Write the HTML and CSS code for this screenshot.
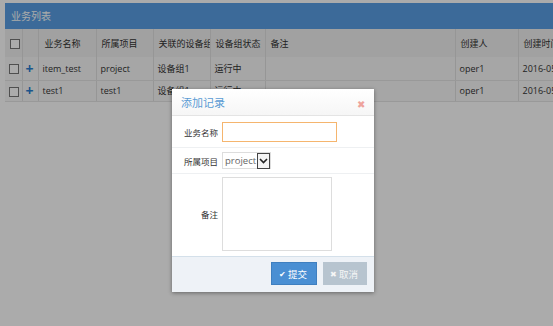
FILE: index.html
```html
<!DOCTYPE html>
<html lang="zh-CN">
<head>
    <meta charset="UTF-8">
    <title>业务列表</title>
    <link rel="stylesheet" href="styles.css">
</head>
<body>
<div class="panel">
    <div class="panel-title">业务列表</div>
    <table class="grid">
        <colgroup>
            <col style="width:17px">
            <col style="width:16px">
            <col style="width:58px">
            <col style="width:57px">
            <col style="width:57px">
            <col style="width:55px">
            <col style="width:190px">
            <col style="width:63px">
            <col style="width:60px">
        </colgroup>
        <thead>
        <tr>
            <th><span class="chk"></span></th>
            <th></th>
            <th class="pad">业务名称</th>
            <th>所属项目</th>
            <th>关联的设备组</th>
            <th>设备组状态</th>
            <th>备注</th>
            <th>创建人</th>
            <th>创建时间</th>
        </tr>
        </thead>
        <tbody>
        <tr>
            <td><span class="chk"></span></td>
            <td class="plus">+</td>
            <td>item_test</td>
            <td>project</td>
            <td>设备组1</td>
            <td>运行中</td>
            <td></td>
            <td>oper1</td>
            <td>2016-05-12</td>
        </tr>
        <tr>
            <td><span class="chk"></span></td>
            <td class="plus">+</td>
            <td>test1</td>
            <td>test1</td>
            <td>设备组1</td>
            <td>运行中</td>
            <td></td>
            <td>oper1</td>
            <td>2016-05-12</td>
        </tr>
        </tbody>
    </table>
</div>

<div class="mask"></div>

<!-- 添加记录弹窗 -->
<div class="modal">
    <div class="modal-head">
        <span class="modal-title">添加记录</span>
        <span class="modal-close">&#10006;</span>
    </div>
    <div class="modal-body">
        <div class="form-row">
            <label>业务名称</label>
            <input class="text-input" type="text">
        </div>
        <div class="form-row">
            <label>所属项目</label>
            <div class="select"><span>project</span><span class="arrow"><svg width="9" height="6" viewBox="0 0 9 6"><path d="M1 1l3.5 3.5L8 1" fill="none" stroke="#222" stroke-width="1.6"/></svg></span></div>
        </div>
        <div class="form-row last">
            <label>备注</label>
            <div class="textarea"></div>
        </div>
    </div>
    <div class="modal-foot">
        <button class="btn btn-ok"><span class="ico">&#10004;</span>提交</button>
        <button class="btn btn-cancel"><span class="ico">&#10006;</span>取消</button>
    </div>
</div>
</body>
</html>
```

FILE: styles.css
```css
* {
    margin: 0;
    padding: 0;
    box-sizing: border-box;
}

body {
    font-family: 'Open Sans', 'Noto Sans CJK SC', sans-serif;
    font-size: 9px;
    color: #333;
    background: #fff;
    height: 326px;
    overflow: hidden;
    padding: 3px 0 0 5px;
    position: relative;
}

/* 列表 */
.panel {
    width: 560px;
}

.panel-title {
    height: 26px;
    line-height: 26px;
    padding-left: 6px;
    background: #5a9fe4;
    color: #fff;
    font-size: 10px;
}

.grid {
    border-collapse: collapse;
    table-layout: fixed;
    width: 573px;
}

.grid th {
    height: 28px;
    font-weight: normal;
    text-align: left;
    padding: 0 5px;
    background: #f0f0f0;
    border-right: 1px solid #e0e0e0;
    white-space: nowrap;
    overflow: hidden;
    color: #333;
}

.grid td {
    height: 23px;
    padding: 0 4px;
    background: #f8f8f8;
    border-right: 1px solid #e0e0e0;
    border-bottom: 1px solid #e4e4e4;
    white-space: nowrap;
    overflow: hidden;
}

.grid tbody tr:last-child td {
    height: 21px;
}

.grid th.pad {
    padding-left: 6px;
}

.chk {
    display: inline-block;
    width: 10px;
    height: 10px;
    border: 1px solid #777;
    background: #fff;
    vertical-align: middle;
}

.grid .plus {
    color: #2a7ed0;
    font-weight: bold;
    font-size: 14px;
    padding-left: 3px;
}

/* 遮罩 */
.mask {
    position: absolute;
    left: 0;
    top: 0;
    width: 100%;
    height: 100%;
    background: rgba(0, 0, 0, 0.33);
}

/* 弹窗 */
.modal {
    position: absolute;
    left: 172px;
    top: 89px;
    width: 202px;
    height: 203px;
    background: #fff;
    box-shadow: 0 1px 4px rgba(0, 0, 0, 0.4);
    display: flex;
    flex-direction: column;
}

.modal-head {
    height: 27px;
    display: flex;
    align-items: center;
    justify-content: space-between;
    padding: 0 9px 0 9px;
    border-bottom: 1px solid #e4e4e4;
    background: linear-gradient(#ffffff, #f6f6f6);
}

.modal-title {
    color: #5a9bd4;
    font-size: 11px;
}

.modal-close {
    color: #eea39c;
    font-size: 10px;
    margin-top: 4px;
}

.modal-body {
    flex: 1;
}

.form-row {
    display: flex;
    align-items: center;
    border-bottom: 1px solid #eef0f2;
    padding: 5px 0;
}

.form-row:first-child {
    height: 32px;
}

.form-row:nth-child(2) {
    height: 26px;
    padding: 3px 0;
}

.form-row.last {
    border-bottom: none;
    padding: 3px 0;
}

.form-row label {
    width: 46px;
    text-align: right;
    margin-right: 4px;
    color: #333;
    font-size: 8.5px;
}

.text-input {
    width: 115px;
    height: 20px;
    border: 1px solid #f5b56e;
    outline: none;
}

.select {
    display: flex;
    align-items: center;
    height: 17px;
    border: 1px solid #ddd;
    padding-left: 2px;
    color: #666;
    font-size: 9.5px;
}

.select .arrow {
    display: flex;
    align-items: center;
    justify-content: center;
    width: 13px;
    height: 16px;
    margin-left: 1px;
    border: 1px solid #444;
    background: #f4f4f4;
}

.textarea {
    width: 110px;
    height: 74px;
    border: 1px solid #ddd;
}

.modal-foot {
    height: 36px;
    background: #eef2f7;
    border-top: 1px solid #d4e0ea;
    display: flex;
    align-items: center;
    justify-content: flex-end;
    padding: 0 7px 2px 0;
    gap: 6px;
}

.btn {
    height: 23px;
    border: none;
    color: #fff;
    font-family: 'Open Sans', 'Noto Sans CJK SC', sans-serif;
    font-size: 9.5px;
    padding: 0 7px;
    display: flex;
    align-items: center;
}

.btn .ico {
    font-size: 8px;
    margin-right: 2px;
}

.btn-ok {
    width: 46px;
    background: #4a8fd3;
    border: 1px solid #3f7fbf;
}

.btn-cancel {
    width: 44px;
    background: #b7c4cf;
    color: #f6f6f6;
}
```
